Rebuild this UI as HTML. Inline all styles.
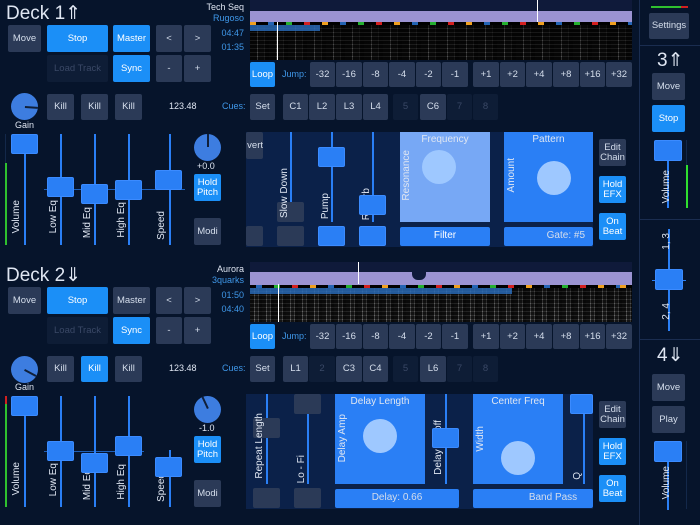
<!DOCTYPE html>
<html><head><meta charset="utf-8"><style>
*{margin:0;padding:0;box-sizing:border-box}
body{width:700px;height:525px;background:#06142b;font-family:"Liberation Sans",sans-serif;color:#dfe6f2;position:relative;overflow:hidden}
.a{position:absolute}
.b{position:absolute;background:#2b3a57;border-radius:2px;font-size:9.5px;display:flex;align-items:center;justify-content:center;text-align:center;line-height:1.05;color:#d5deec}
.on{background:#1b8ff7;color:#fff}
.dk{background:#0e1d36;color:#3a4866}
.th{position:absolute;background:#2a7ff5;border-radius:2px;border:1px solid #3b8bff}
.tr{position:absolute;width:2px;background:#2a7ff5}
.t{position:absolute;font-size:9px;color:#dfe6f2}
.bl{color:#3f97e8}
.v{position:absolute;writing-mode:vertical-rl;transform:rotate(180deg);font-size:10px;color:#dfe6f2;white-space:nowrap}
.k{position:absolute;border-radius:50%;background:#3d7de0}
.wf{position:absolute;left:250px;width:382px;height:60px;background:#0f1a3a;overflow:hidden}
.wf .p{position:absolute;left:0;right:0;top:11px;height:11px;background:#9b93d2}
.wf .m{position:absolute;left:0;right:0;top:22px;height:3px;background:repeating-linear-gradient(90deg,#f0a020 0 6px,#000 6px 18px,#2464b4 18px 24px,#000 24px 36px,#25b030 36px 42px,#000 42px 54px,#d42020 54px 60px,#000 60px 72px)}
.wf .s{position:absolute;left:0;right:0;top:25px;bottom:0;background:repeating-linear-gradient(90deg,#101010 0 7px,#777 7px 8px,#151515 8px 14px,#333 14px 15px,#0c0c0c 15px 19px),#111}
.wf .s:after{content:"";position:absolute;inset:0;background:repeating-linear-gradient(180deg,rgba(0,0,0,.5) 0 3px,rgba(60,60,60,.3) 3px 4px),linear-gradient(180deg,rgba(0,0,0,.5),rgba(0,0,0,.2))}
.fx{position:absolute;left:246px;width:347px;background:#0b2149}
.pad{position:absolute;background:#2a7ff5}
.c{position:absolute;border-radius:50%;background:#9ec8ff;width:34px;height:34px}
</style></head><body>

<!-- sidebar -->
<div class="a" style="left:639px;top:0;width:1px;height:525px;background:#1a2d50"></div>
<div class="a" style="left:640px;top:45px;width:60px;height:1px;background:#1a2d50"></div>
<div class="a" style="left:640px;top:219px;width:60px;height:1px;background:#1a2d50"></div>
<div class="a" style="left:640px;top:339px;width:60px;height:1px;background:#1a2d50"></div>
<div class="a" style="left:651px;top:6px;width:30px;height:2px;background:#2fc02f"></div>
<div class="a" style="left:681px;top:6px;width:7px;height:2px;background:#d02020"></div>
<div class="b" style="left:649px;top:13px;width:40px;height:26px">Settings</div>
<div class="t" style="left:657px;top:49px;font-size:19px">3⇑</div>
<div class="b" style="left:652px;top:73px;width:33px;height:27px">Move</div>
<div class="b on" style="left:652px;top:105px;width:33px;height:27px">Stop</div>
<div class="tr" style="left:667px;top:150px;height:58px"></div>
<div class="th" style="left:654px;top:140px;width:28px;height:21px"></div>
<div class="v" style="left:661px;top:170px">Volume</div>
<div class="a" style="left:686px;top:140px;width:1px;height:68px;background:#13284a"></div>
<div class="a" style="left:686px;top:165px;width:2px;height:43px;background:#2fe02f"></div>
<div class="tr" style="left:668px;top:229px;height:102px"></div>
<div class="a" style="left:652px;top:280px;width:34px;height:1px;background:#2a7ff5"></div>
<div class="th" style="left:655px;top:269px;width:28px;height:21px"></div>
<div class="v" style="left:661px;top:233px">1, 3</div>
<div class="v" style="left:661px;top:303px">2, 4</div>
<div class="t" style="left:657px;top:344px;font-size:19px">4⇓</div>
<div class="b" style="left:652px;top:374px;width:33px;height:27px">Move</div>
<div class="b" style="left:652px;top:406px;width:33px;height:27px">Play</div>
<div class="tr" style="left:667px;top:450px;height:60px"></div>
<div class="th" style="left:654px;top:441px;width:28px;height:21px"></div>
<div class="v" style="left:661px;top:466px">Volume</div>
<div class="a" style="left:686px;top:441px;width:1px;height:68px;background:#13284a"></div>

<!-- DECK 1 -->
<div class="t" style="left:6px;top:2px;font-size:19px">Deck 1⇑</div>
<div class="b" style="left:8px;top:25px;width:33px;height:27px">Move</div>
<div class="b on" style="left:47px;top:25px;width:61px;height:27px">Stop</div>
<div class="b on" style="left:113px;top:25px;width:37px;height:27px">Master</div>
<div class="b" style="left:156px;top:25px;width:26px;height:27px">&lt;</div>
<div class="b" style="left:184px;top:25px;width:27px;height:27px">&gt;</div>
<div class="b dk" style="left:47px;top:55px;width:61px;height:27px">Load Track</div>
<div class="b on" style="left:113px;top:55px;width:37px;height:27px">Sync</div>
<div class="b" style="left:156px;top:55px;width:26px;height:27px">-</div>
<div class="b" style="left:184px;top:55px;width:27px;height:27px">+</div>
<div class="t" style="right:456px;top:2px">Tech Seq</div>
<div class="t bl" style="right:456px;top:13px">Rugoso</div>
<div class="t bl" style="right:456px;top:28px">04:47</div>
<div class="t bl" style="right:456px;top:42px">01:35</div>
<div class="wf" style="top:0"><div class="p"></div><div class="m"></div><div class="s"></div>
<div class="a" style="left:0;top:25px;width:70px;height:6px;background:#2a6fc0;opacity:.8"></div>
<div class="a" style="left:27px;top:22px;width:1px;height:38px;background:#fff"></div>
<div class="a" style="left:287px;top:0;width:1px;height:22px;background:#fff"></div></div>
<div class="b on" style="left:250px;top:62px;width:25px;height:25px">Loop</div>
<div class="t bl" style="left:282px;top:69px">Jump:</div>
<div class="b" style="left:310px;top:62px;width:25px;height:25px">-32</div>
<div class="b" style="left:336px;top:62px;width:26px;height:25px">-16</div>
<div class="b" style="left:363px;top:62px;width:25px;height:25px">-8</div>
<div class="b" style="left:389px;top:62px;width:26px;height:25px">-4</div>
<div class="b" style="left:416px;top:62px;width:25px;height:25px">-2</div>
<div class="b" style="left:442px;top:62px;width:26px;height:25px">-1</div>
<div class="b" style="left:473px;top:62px;width:26px;height:25px">+1</div>
<div class="b" style="left:500px;top:62px;width:25px;height:25px">+2</div>
<div class="b" style="left:526px;top:62px;width:26px;height:25px">+4</div>
<div class="b" style="left:553px;top:62px;width:26px;height:25px">+8</div>
<div class="b" style="left:580px;top:62px;width:25px;height:25px">+16</div>
<div class="b" style="left:606px;top:62px;width:26px;height:25px">+32</div>
<div class="k" style="left:11px;top:93px;width:27px;height:27px"></div>
<div class="a" style="left:25px;top:106px;width:13px;height:1.5px;background:#10203a;transform:rotate(4deg);transform-origin:0 0"></div>
<div class="t" style="left:15px;top:120px">Gain</div>
<div class="b" style="left:47px;top:94px;width:27px;height:26px">Kill</div>
<div class="b" style="left:81px;top:94px;width:27px;height:26px">Kill</div>
<div class="b" style="left:115px;top:94px;width:27px;height:26px">Kill</div>
<div class="t" style="left:169px;top:101px">123.48</div>
<div class="t bl" style="left:222px;top:101px">Cues:</div>
<div class="b" style="left:250px;top:94px;width:25px;height:26px">Set</div>
<div class="b" style="left:283px;top:94px;width:25px;height:26px">C1</div>
<div class="b" style="left:309px;top:94px;width:26px;height:26px">L2</div>
<div class="b" style="left:336px;top:94px;width:26px;height:26px">L3</div>
<div class="b" style="left:363px;top:94px;width:25px;height:26px">L4</div>
<div class="b dk" style="left:393px;top:94px;width:25px;height:26px">5</div>
<div class="b" style="left:420px;top:94px;width:26px;height:26px">C6</div>
<div class="b dk" style="left:447px;top:94px;width:25px;height:26px">7</div>
<div class="b dk" style="left:473px;top:94px;width:25px;height:26px">8</div>
<!-- sliders 1 -->
<div class="a" style="left:5px;top:134px;width:1px;height:111px;background:#13284a"></div>
<div class="a" style="left:5px;top:163px;width:2px;height:82px;background:#2fc02f"></div>
<div class="tr" style="left:24px;top:134px;height:111px"></div>
<div class="th" style="left:11px;top:134px;width:27px;height:20px"></div>
<div class="v" style="left:11px;top:200px">Volume</div>
<div class="a" style="left:44px;top:189px;width:141px;height:1px;background:#2a7ff5;opacity:.7"></div>
<div class="tr" style="left:60px;top:134px;height:111px"></div><div class="th" style="left:47px;top:177px;width:27px;height:20px"></div><div class="v" style="left:48px;top:200px">Low Eq</div>
<div class="tr" style="left:94px;top:134px;height:111px"></div><div class="th" style="left:81px;top:184px;width:27px;height:20px"></div><div class="v" style="left:82px;top:207px">Mid Eq</div>
<div class="tr" style="left:128px;top:134px;height:111px"></div><div class="th" style="left:115px;top:180px;width:27px;height:20px"></div><div class="v" style="left:116px;top:202px">High Eq</div>
<div class="tr" style="left:169px;top:134px;height:111px"></div><div class="th" style="left:155px;top:170px;width:27px;height:20px"></div><div class="v" style="left:156px;top:211px">Speed</div>
<div class="k" style="left:194px;top:134px;width:27px;height:27px"></div>
<div class="a" style="left:207px;top:134px;width:1.5px;height:13px;background:#10203a"></div>
<div class="t" style="left:197px;top:161px">+0.0</div>
<div class="b on" style="left:194px;top:174px;width:27px;height:27px">Hold<br>Pitch</div>
<div class="b" style="left:194px;top:218px;width:27px;height:27px">Modi</div>
<!-- fx 1 -->
<div class="fx" style="top:132px;height:115px"></div>
<div class="b" style="left:246px;top:132px;width:17px;height:27px;justify-content:flex-end">vert</div>
<div class="tr" style="left:290px;top:132px;height:90px"></div><div class="b" style="left:277px;top:202px;width:27px;height:20px"></div><div class="v" style="left:279px;top:168px">Slow Down</div>
<div class="tr" style="left:331px;top:132px;height:90px"></div><div class="th" style="left:318px;top:147px;width:27px;height:20px"></div><div class="v" style="left:320px;top:193px">Pump</div>
<div class="tr" style="left:372px;top:132px;height:90px"></div><div class="v" style="left:361px;top:188px">Reverb</div><div class="th" style="left:359px;top:195px;width:27px;height:20px"></div>
<div class="b" style="left:246px;top:226px;width:17px;height:20px"></div>
<div class="b" style="left:277px;top:226px;width:27px;height:20px"></div>
<div class="th" style="left:318px;top:226px;width:27px;height:20px"></div>
<div class="th" style="left:359px;top:226px;width:27px;height:20px"></div>
<div class="pad" style="left:400px;top:132px;width:90px;height:90px;background:#77a8f5"></div>
<div class="t" style="left:400px;top:134px;width:90px;text-align:center;font-size:10px">Frequency</div>
<div class="v" style="left:401px;top:150px">Resonance</div>
<div class="c" style="left:422px;top:150px"></div>
<div class="b on" style="left:400px;top:227px;width:90px;height:19px;background:#2a7ff5;font-size:10px">Filter</div>
<div class="pad" style="left:504px;top:132px;width:89px;height:90px"></div>
<div class="t" style="left:504px;top:134px;width:89px;text-align:center;font-size:10px">Pattern</div>
<div class="v" style="left:506px;top:158px">Amount</div>
<div class="c" style="left:537px;top:161px"></div>
<div class="b" style="left:504px;top:227px;width:89px;height:19px;background:#2a7ff5;font-size:10px;justify-content:flex-end;padding-right:8px">Gate: #5</div>
<div class="b" style="left:599px;top:139px;width:27px;height:27px">Edit<br>Chain</div>
<div class="b on" style="left:599px;top:176px;width:27px;height:27px">Hold<br>EFX</div>
<div class="b on" style="left:599px;top:213px;width:27px;height:27px">On<br>Beat</div>

<!-- DECK 2 -->
<div class="t" style="left:6px;top:264px;font-size:19px">Deck 2⇓</div>
<div class="b" style="left:8px;top:287px;width:33px;height:27px">Move</div>
<div class="b on" style="left:47px;top:287px;width:61px;height:27px">Stop</div>
<div class="b" style="left:113px;top:287px;width:37px;height:27px">Master</div>
<div class="b" style="left:156px;top:287px;width:26px;height:27px">&lt;</div>
<div class="b" style="left:184px;top:287px;width:27px;height:27px">&gt;</div>
<div class="b dk" style="left:47px;top:317px;width:61px;height:27px">Load Track</div>
<div class="b on" style="left:113px;top:317px;width:37px;height:27px">Sync</div>
<div class="b" style="left:156px;top:317px;width:26px;height:27px">-</div>
<div class="b" style="left:184px;top:317px;width:27px;height:27px">+</div>
<div class="t" style="right:456px;top:264px">Aurora</div>
<div class="t bl" style="right:456px;top:275px">3quarks</div>
<div class="t bl" style="right:456px;top:290px">01:50</div>
<div class="t bl" style="right:456px;top:304px">04:40</div>
<div class="wf" style="top:262px"><div class="p" style="top:10px;height:13px"></div><div class="m" style="top:23px;background-position:-12px 0"></div><div class="s" style="top:26px;background:repeating-linear-gradient(90deg,#222 0 4px,#aaa 4px 5px,#333 5px 8px,#888 8px 9px,#1a1a1a 9px 12px),#222"></div>
<div class="a" style="left:0;top:26px;width:262px;height:6px;background:#2a6fc0;opacity:.8"></div>
<div class="a" style="left:28px;top:22px;width:1px;height:38px;background:#fff"></div>
<div class="a" style="left:108px;top:0;width:1px;height:22px;background:#fff"></div>
<div class="a" style="left:162px;top:10px;width:14px;height:8px;background:#0f1a3a;border-radius:0 0 6px 6px"></div></div>
<div class="b on" style="left:250px;top:324px;width:25px;height:25px">Loop</div>
<div class="t bl" style="left:282px;top:331px">Jump:</div>
<div class="b" style="left:310px;top:324px;width:25px;height:25px">-32</div>
<div class="b" style="left:336px;top:324px;width:26px;height:25px">-16</div>
<div class="b" style="left:363px;top:324px;width:25px;height:25px">-8</div>
<div class="b" style="left:389px;top:324px;width:26px;height:25px">-4</div>
<div class="b" style="left:416px;top:324px;width:25px;height:25px">-2</div>
<div class="b" style="left:442px;top:324px;width:26px;height:25px">-1</div>
<div class="b" style="left:473px;top:324px;width:26px;height:25px">+1</div>
<div class="b" style="left:500px;top:324px;width:25px;height:25px">+2</div>
<div class="b" style="left:526px;top:324px;width:26px;height:25px">+4</div>
<div class="b" style="left:553px;top:324px;width:26px;height:25px">+8</div>
<div class="b" style="left:580px;top:324px;width:25px;height:25px">+16</div>
<div class="b" style="left:606px;top:324px;width:26px;height:25px">+32</div>
<div class="k" style="left:11px;top:356px;width:27px;height:27px"></div>
<div class="a" style="left:25px;top:369px;width:13px;height:1.5px;background:#10203a;transform:rotate(28deg);transform-origin:0 0"></div>
<div class="t" style="left:15px;top:382px">Gain</div>
<div class="b" style="left:47px;top:356px;width:27px;height:26px">Kill</div>
<div class="b on" style="left:81px;top:356px;width:27px;height:26px">Kill</div>
<div class="b" style="left:115px;top:356px;width:27px;height:26px">Kill</div>
<div class="t" style="left:169px;top:363px">123.48</div>
<div class="t bl" style="left:222px;top:363px">Cues:</div>
<div class="b" style="left:250px;top:356px;width:25px;height:26px">Set</div>
<div class="b" style="left:283px;top:356px;width:25px;height:26px">L1</div>
<div class="b dk" style="left:309px;top:356px;width:26px;height:26px">2</div>
<div class="b" style="left:336px;top:356px;width:26px;height:26px">C3</div>
<div class="b" style="left:363px;top:356px;width:25px;height:26px">C4</div>
<div class="b dk" style="left:393px;top:356px;width:25px;height:26px">5</div>
<div class="b" style="left:420px;top:356px;width:26px;height:26px">L6</div>
<div class="b dk" style="left:447px;top:356px;width:25px;height:26px">7</div>
<div class="b dk" style="left:473px;top:356px;width:25px;height:26px">8</div>
<!-- sliders 2 -->
<div class="a" style="left:5px;top:396px;width:2px;height:111px;background:#2fc02f"></div>
<div class="a" style="left:5px;top:396px;width:2px;height:8px;background:#d02020"></div>
<div class="tr" style="left:24px;top:396px;height:111px"></div>
<div class="th" style="left:11px;top:396px;width:27px;height:20px"></div>
<div class="v" style="left:11px;top:462px">Volume</div>
<div class="a" style="left:44px;top:451px;width:100px;height:1px;background:#2a7ff5;opacity:.7"></div>
<div class="tr" style="left:60px;top:396px;height:111px"></div><div class="th" style="left:47px;top:441px;width:27px;height:20px"></div><div class="v" style="left:48px;top:463px">Low Eq</div>
<div class="tr" style="left:94px;top:396px;height:111px"></div><div class="v" style="left:82px;top:469px">Mid Eq</div><div class="th" style="left:81px;top:453px;width:27px;height:20px"></div>
<div class="tr" style="left:128px;top:396px;height:111px"></div><div class="th" style="left:115px;top:436px;width:27px;height:20px"></div><div class="v" style="left:116px;top:464px">High Eq</div>
<div class="tr" style="left:169px;top:450px;height:57px"></div><div class="v" style="left:156px;top:473px">Speed</div><div class="th" style="left:155px;top:457px;width:27px;height:20px"></div>
<div class="k" style="left:194px;top:396px;width:27px;height:27px"></div>
<div class="a" style="left:207px;top:409px;width:13px;height:1.5px;background:#10203a;transform:rotate(-115deg);transform-origin:0 0"></div>
<div class="t" style="left:199px;top:423px">-1.0</div>
<div class="b on" style="left:194px;top:436px;width:27px;height:27px">Hold<br>Pitch</div>
<div class="b" style="left:194px;top:480px;width:27px;height:27px">Modi</div>
<!-- fx 2 -->
<div class="fx" style="top:394px;height:115px"></div>
<div class="tr" style="left:266px;top:394px;height:90px"></div><div class="b" style="left:253px;top:418px;width:27px;height:20px"></div><div class="v" style="left:254px;top:413px">Repeat Length</div>
<div class="tr" style="left:307px;top:394px;height:90px"></div><div class="b" style="left:294px;top:394px;width:27px;height:20px"></div><div class="v" style="left:296px;top:455px">Lo - Fi</div>
<div class="b" style="left:253px;top:488px;width:27px;height:20px"></div>
<div class="b" style="left:294px;top:488px;width:27px;height:20px"></div>
<div class="pad" style="left:335px;top:394px;width:90px;height:90px"></div>
<div class="t" style="left:335px;top:396px;width:90px;text-align:center;font-size:10px">Delay Length</div>
<div class="v" style="left:337px;top:414px">Delay Amp</div>
<div class="c" style="left:363px;top:419px"></div>
<div class="b" style="left:335px;top:489px;width:124px;height:19px;background:#2a7ff5;font-size:10px">Delay: 0.66</div>
<div class="tr" style="left:445px;top:394px;height:90px"></div><div class="v" style="left:433px;top:420px">Delay Cutoff</div><div class="th" style="left:432px;top:428px;width:27px;height:20px"></div>
<div class="pad" style="left:473px;top:394px;width:90px;height:90px"></div>
<div class="t" style="left:473px;top:396px;width:90px;text-align:center;font-size:10px">Center Freq</div>
<div class="v" style="left:475px;top:426px">Width</div>
<div class="c" style="left:501px;top:441px"></div>
<div class="b" style="left:473px;top:489px;width:120px;height:19px;background:#2a7ff5;font-size:10px;padding-left:40px">Band Pass</div>
<div class="tr" style="left:583px;top:394px;height:90px"></div><div class="th" style="left:570px;top:394px;width:23px;height:20px"></div><div class="v" style="left:572px;top:472px">Q</div>
<div class="b" style="left:599px;top:401px;width:27px;height:27px">Edit<br>Chain</div>
<div class="b on" style="left:599px;top:438px;width:27px;height:27px">Hold<br>EFX</div>
<div class="b on" style="left:599px;top:475px;width:27px;height:27px">On<br>Beat</div>
</body></html>
